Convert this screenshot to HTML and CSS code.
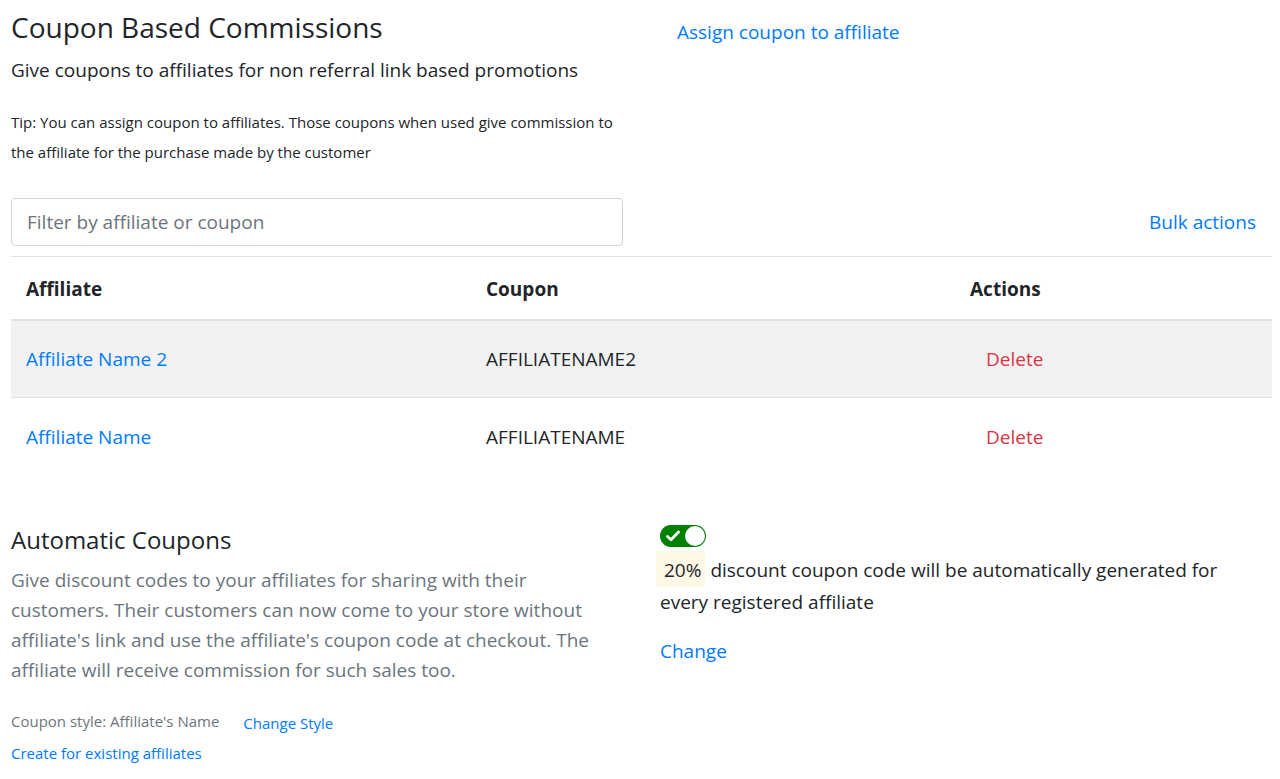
FILE: index.html
```html
<!DOCTYPE html>
<html>
<head>
<meta charset="utf-8">
<link rel="stylesheet" href="styles.css">
</head>
<body>
<div class="page">
  <div class="top">
    <div class="intro">
      <h3 class="title">Coupon Based Commissions</h3>
      <h5 class="subtitle">Give coupons to affiliates for non referral link based promotions</h5>
      <p class="tip">Tip: You can assign coupon to affiliates. Those coupons when used give commission to the affiliate for the purchase made by the customer</p>
    </div>
    <a class="link assign" href="#">Assign coupon to affiliate</a>
  </div>

  <div class="filter-row">
    <input class="filter" type="text" placeholder="Filter by affiliate or coupon">
    <a class="link bulk" href="#">Bulk actions</a>
  </div>

  <table class="coupons">
    <thead>
      <tr><th class="c1">Affiliate</th><th class="c2">Coupon</th><th class="c3">Actions</th></tr>
    </thead>
    <tbody>
      <tr class="striped"><td><a class="link" href="#">Affiliate Name 2</a></td><td>AFFILIATENAME2</td><td><a class="del" href="#">Delete</a></td></tr>
      <tr><td><a class="link" href="#">Affiliate Name</a></td><td>AFFILIATENAME</td><td><a class="del" href="#">Delete</a></td></tr>
    </tbody>
  </table>

  <div class="auto">
    <div class="auto-left">
      <h4 class="auto-title">Automatic Coupons</h4>
      <p class="auto-desc">Give discount codes to your affiliates for sharing with their customers. Their customers can now come to your store without affiliate's link and use the affiliate's coupon code at checkout. The affiliate will receive commission for such sales too.</p>
      <div class="style-row"><span class="muted">Coupon style: Affiliate's Name</span><a class="link small shifted" href="#">Change Style</a></div>
      <a class="link small create" href="#">Create for existing affiliates</a>
    </div>
    <div class="auto-right">
      <div class="toggle">
        <svg class="check" width="14" height="12" viewBox="0 0 14 12"><path d="M1.5 6.5 L5 9.8 L12.5 2" fill="none" stroke="#fff" stroke-width="2.8" stroke-linecap="round" stroke-linejoin="round"/></svg>
        <span class="knob"></span>
      </div>
      <p class="auto-text"><span class="pct">20%</span> <span>discount coupon code will be automatically generated for every registered affiliate</span></p>
      <a class="link big" href="#">Change</a>
    </div>
  </div>
</div>
</body>
</html>
```

FILE: styles.css
```css
* { box-sizing: border-box; }
body {
  margin: 0;
  font-family: "Open Sans", "Noto Sans", sans-serif;
  color: #212529;
  background: #fff;
}
.page { padding: 0 8px 0 11px; }
.link { color: #007bff; text-decoration: none; }
.top { display: flex; align-items: flex-start; }
.intro { width: 616px; }
.title { margin: 0; padding-top: 8px; font-size: 28px; font-weight: 400; line-height: 38px; }
.subtitle { margin: 12px 0 0; font-size: 19px; font-weight: 400; line-height: 24px; }
.tip { margin: 25px 0 0; font-size: 15px; line-height: 30px; }
.assign { margin-left: 50px; margin-top: 18px; font-size: 19px; line-height: 28px; }

.filter-row { display: flex; align-items: center; justify-content: space-between; margin-top: 31px; }
.filter {
  width: 612px; height: 48px; border: 1px solid #ced4da; border-radius: 4px;
  padding: 0 15px; font-family: inherit; font-size: 19px; color: #495057;
}
.filter::placeholder { color: #6c757d; }
.bulk { font-size: 19px; margin-right: 16px; }

.coupons { width: 100%; border-collapse: collapse; margin-top: 10px; font-size: 19px; }
.coupons th, .coupons td { padding: 0 15px; text-align: left; border-top: 1px solid #dee2e6; }
.coupons th { height: 63px; font-weight: 700; border-bottom: 2px solid #dee2e6; padding-top: 2px; }
.coupons td { height: 78px; }
.c1 { width: 460px; }
.c2 { width: 484px; }
.striped td { background: #f2f2f2; }
.del { color: #dc3545; text-decoration: none; padding: 0 16px; }

.auto { display: flex; margin-top: 46px; }
.auto-left { width: 649px; padding-right: 40px; }
.auto-title { margin: 0; font-size: 24px; font-weight: 400; line-height: 36px; }
.auto-desc { margin: 7px 0 0; color: #6c757d; font-size: 19px; line-height: 30px; }
.style-row { display: flex; align-items: center; margin-top: 21px; }
.muted { color: #6c757d; font-size: 15px; margin-right: 24px; line-height: 30px; }
.small { font-size: 15px; line-height: 30px; }
.shifted { position: relative; top: 2px; }
.create { display: inline-block; margin-top: 2px; }
.auto-right { flex: 1; padding-top: 3px; max-width: 596px; }
.toggle {
  width: 46px; height: 22px; border-radius: 11px; background: #008000;
  display: flex; align-items: center; justify-content: space-between; padding: 0 1px 0 6px;
}
.knob { width: 20px; height: 20px; border-radius: 50%; background: #fff; }
.auto-text { margin: 4px 0 0; font-size: 19px; line-height: 30px; }
.pct {
  display: inline-block; background: #fff8e6; line-height: 26px;
  padding: 6px 4px 4px 8px; margin-left: -4px;
}
.big { display: inline-block; margin-top: 19px; font-size: 19px; line-height: 30px; }
```
